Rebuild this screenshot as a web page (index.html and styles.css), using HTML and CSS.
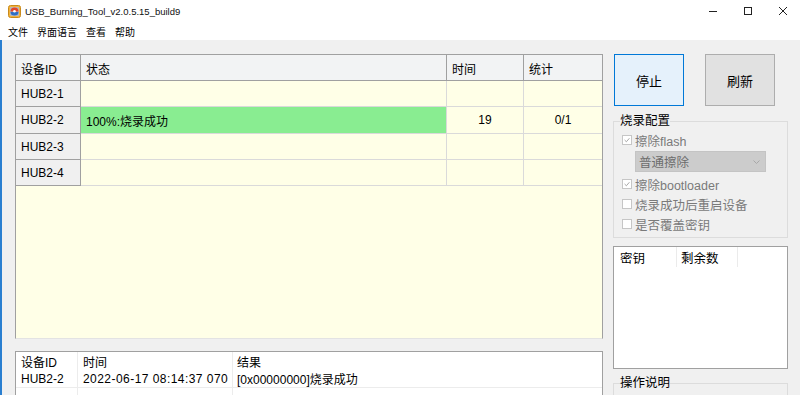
FILE: index.html
```html
<!DOCTYPE html>
<html lang="zh-CN">
<head>
    <meta charset="UTF-8">
    <title>USB_Burning_Tool_v2.0.5.15_build9</title>
    <link rel="stylesheet" href="styles.css">
</head>
<body>
    <div class="titlebar">
        <svg class="app-icon" viewBox="0 0 13 13">
            <rect x="0.5" y="0.5" width="12" height="12" rx="2" fill="#f2b33a" stroke="#c98a1c"/>
            <rect x="2" y="2" width="9" height="9" rx="1" fill="#b8b8c0"/>
            <path d="M2.5 6.5 a4 4 0 0 1 8 0 z" fill="#e2462c"/>
            <path d="M2.5 7 h8 a4 3.5 0 0 1 -8 0 z" fill="#2f6fc4"/>
            <circle cx="6.5" cy="6.2" r="1.3" fill="#fff"/>
        </svg>
        <span class="title">USB_Burning_Tool_v2.0.5.15_build9</span>
        <div class="win-controls">
            <div class="win-btn">
                <svg width="10" height="10" viewBox="0 0 10 10"><path d="M1 5.5 h8" stroke="#222" stroke-width="1"/></svg>
            </div>
            <div class="win-btn">
                <svg width="10" height="10" viewBox="0 0 10 10"><rect x="1.5" y="1.5" width="7" height="7" fill="none" stroke="#222" stroke-width="1"/></svg>
            </div>
            <div class="win-btn">
                <svg width="10" height="10" viewBox="0 0 10 10"><path d="M1 1 L9 9 M9 1 L1 9" stroke="#222" stroke-width="1"/></svg>
            </div>
        </div>
    </div>

    <div class="menubar">
        <span>文件</span>
        <span>界面语言</span>
        <span>查看</span>
        <span>帮助</span>
    </div>

    <div class="client">
        <div class="left">
            <div class="dev-box">
                <div class="dev-grid">
                    <div class="c head">设备ID</div>
                    <div class="c head">状态</div>
                    <div class="c head">时间</div>
                    <div class="c head last">统计</div>

                    <div class="c id">HUB2-1</div>
                    <div class="c cell"></div>
                    <div class="c cell"></div>
                    <div class="c cell last"></div>

                    <div class="c id">HUB2-2</div>
                    <div class="c cell ok">100%:烧录成功</div>
                    <div class="c cell num">19</div>
                    <div class="c cell num last">0/1</div>

                    <div class="c id">HUB2-3</div>
                    <div class="c cell"></div>
                    <div class="c cell"></div>
                    <div class="c cell last"></div>

                    <div class="c id">HUB2-4</div>
                    <div class="c cell"></div>
                    <div class="c cell"></div>
                    <div class="c cell last"></div>
                </div>
            </div>

            <div class="log-box">
                <div class="log-grid">
                    <div class="l">设备ID</div>
                    <div class="l">时间</div>
                    <div class="l">结果</div>
                    <div class="l row">HUB2-2</div>
                    <div class="l row stamp">2022-06-17 08:14:37 070</div>
                    <div class="l row">[0x00000000]烧录成功</div>
                    <div class="l"></div>
                    <div class="l"></div>
                    <div class="l"></div>
                </div>
            </div>
        </div>

        <div class="right">
            <div class="btn-row">
                <div class="btn primary">停止</div>
                <div class="btn">刷新</div>
            </div>

            <fieldset class="group">
                <legend>烧录配置</legend>
                <div class="opt">
                    <span class="chk"><svg viewBox="0 0 10 10"><path d="M2 5 L4.2 7.2 L8 2.8" fill="none" stroke="#9a9a9a" stroke-width="1.1"/></svg></span>
                    擦除flash
                </div>
                <div class="select">
                    <span>普通擦除</span>
                    <svg width="7" height="4" viewBox="0 0 7 4"><path d="M0.5 0.5 L3.5 3.5 L6.5 0.5" fill="none" stroke="#a8a8a8" stroke-width="1"/></svg>
                </div>
                <div class="opt">
                    <span class="chk"><svg viewBox="0 0 10 10"><path d="M2 5 L4.2 7.2 L8 2.8" fill="none" stroke="#9a9a9a" stroke-width="1.1"/></svg></span>
                    擦除bootloader
                </div>
                <div class="opt">
                    <span class="chk"></span>
                    烧录成功后重启设备
                </div>
                <div class="opt">
                    <span class="chk"></span>
                    是否覆盖密钥
                </div>
            </fieldset>

            <div class="key-box">
                <div class="key-head">
                    <div class="k">密钥</div>
                    <div class="k">剩余数</div>
                    <div class="k"></div>
                </div>
            </div>

            <fieldset class="group help">
                <legend>操作说明</legend>
            </fieldset>
        </div>
    </div>
</body>
</html>
```

FILE: styles.css
```css
* { box-sizing: border-box; }
body { margin: 0; width: 800px; height: 395px; overflow: hidden; background: #f0f0f0; font-family: "Liberation Sans", "Noto Sans CJK SC", sans-serif; font-size: 12px; color: #000; }

.titlebar { height: 22px; background: #fff; display: flex; align-items: center; }
.app-icon { width: 13px; height: 13px; margin-left: 8px; }
.title { margin-left: 4px; font-size: 9.5px; color: #111; }
.win-controls { margin-left: auto; display: flex; height: 22px; }
.win-btn { width: 35px; display: flex; align-items: center; justify-content: center; }

.menubar { height: 18px; background: #fff; display: flex; align-items: center; padding-left: 8px; font-size: 10px; }
.menubar span { margin-right: 9px; }

.client { display: flex; height: 355px; border-left: 2px solid #2a7fd0; padding: 14px 0 0 13px; }
.left { width: 588px; display: flex; flex-direction: column; }
.right { width: 175px; margin-left: 10px; }

/* device table */
.dev-box { flex-shrink: 0; height: 285px; background: #ffffe7; border: 1px solid #a0a0a0; border-bottom-color: #e3e3e3; }
.dev-grid { display: grid; grid-template-columns: 65px 366px 77px 78px; grid-template-rows: 26px 26px 27px 26px 26px; }
.c { display: flex; align-items: center; padding-left: 5px; white-space: nowrap; }
.head { background: #f2f3f4; border-right: 1px solid #a0a0a0; border-bottom: 1px solid #a0a0a0; padding-top: 2px; }
.id { background: #f0f0f0; border-right: 1px solid #a0a0a0; border-bottom: 1px solid #a0a0a0; }
.cell { border-right: 1px solid #dadada; border-bottom: 1px solid #dadada; }
.last { border-right: none; }
.ok { background: #89ed91; }
.num { justify-content: center; padding-left: 0; }

/* log table */
.log-box { flex-shrink: 0; margin-top: 12px; height: 60px; background: #fff; border: 1px solid #a0a0a0; border-bottom: none; }
.log-grid { display: grid; grid-template-columns: 62px 155px 1fr; grid-template-rows: 18px 18px 18px; }
.l { display: flex; align-items: center; padding-left: 5px; border-right: 1px solid #ececec; white-space: nowrap; }
.l:nth-child(3n) { border-right: none; padding-left: 4px; }
.row { border-bottom: 1px solid #ececec; }
.stamp { letter-spacing: 0.45px; }

/* right side */
.btn-row { display: flex; gap: 21px; padding-left: 1px; }
.btn { width: 70px; height: 52px; display: flex; align-items: center; justify-content: center; font-size: 13px; background: #e1e1e1; border: 1px solid #adadad; }
.btn.primary { background: #e5f1fb; border-color: #0078d7; }

.group { margin: 6px 0 0; padding: 0 0 3px 6px; border: 1px solid #dcdcdc; min-width: 0; }
.group legend { padding: 0; font-size: 12.5px; line-height: 18px; }
.opt { height: 20px; display: flex; align-items: center; margin-left: 2px; font-size: 12.5px; color: #7a7a7a; }
.chk { width: 10px; height: 10px; border: 1px solid #c6c6c6; background: #fff; margin-right: 3px; display: flex; }
.chk svg { width: 8px; height: 8px; }
.select { width: 131px; height: 21px; margin: 1px 0 2px 15px; background: #cccccc; border: 1px solid #c4c4c4; display: flex; align-items: center; justify-content: space-between; padding: 0 5px 0 3px; font-size: 12.5px; color: #6d6d6d; }

.key-box { margin-top: 8px; height: 123px; background: #fff; border: 1px solid #a0a0a0; }
.key-head { display: grid; grid-template-columns: 63px 61px 1fr; height: 20px; }
.k { display: flex; align-items: center; padding-left: 6px; border-right: 1px solid #ebebeb; font-size: 12.5px; }
.k:nth-child(2) { padding-left: 4px; }
.k:last-child { border-right: none; }

.group.help { margin-top: 5px; height: 40px; }
```
